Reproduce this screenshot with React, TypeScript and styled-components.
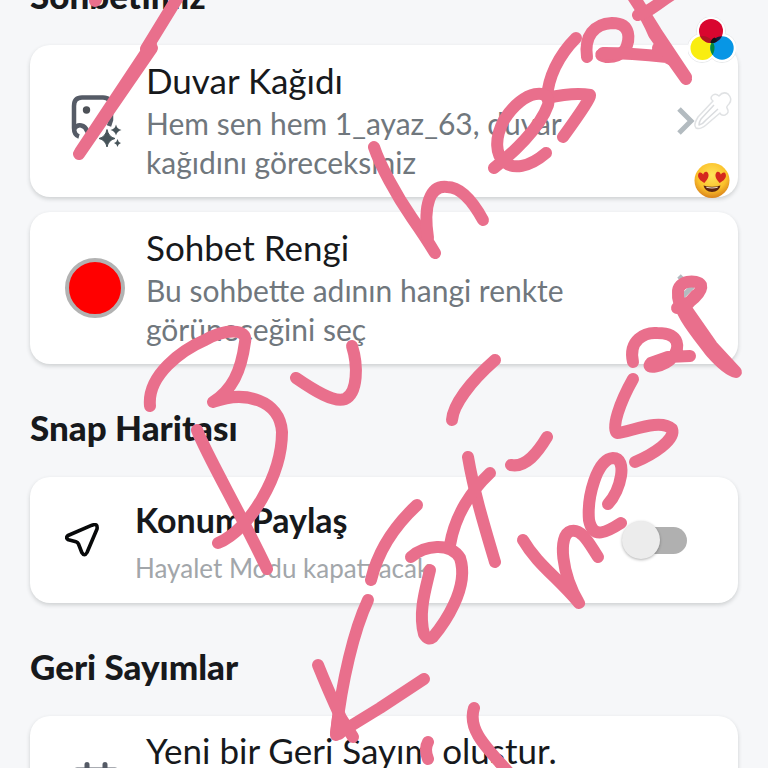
import React from "react";
import styled, { createGlobalStyle } from "styled-components";

const GlobalStyle = createGlobalStyle`
  * { box-sizing: border-box; }
  body {
    margin: 0;
    background: #f6f7f9;
    font-family: Lato, "Open Sans", sans-serif;
    color: #17191c;
  }
`;

const Screen = styled.main`
  position: relative;
  height: 100vh;
  overflow: hidden;
`;

const Scrolled = styled.div`
  display: flex;
  flex-direction: column;
  gap: 43px;
  margin-top: -25px;
  padding: 0 30px;
`;

const Section = styled.section`
  display: flex;
  flex-direction: column;
  gap: 15px;
`;

const Heading = styled.h2`
  margin: 0 0 15px;
  font-size: 35px;
  line-height: 40px;
  font-weight: 900;
`;

const cardBase = `
  display: flex;
  align-items: center;
  width: 100%;
  border: 0;
  border-radius: 20px;
  background: #fff;
  box-shadow: 0 2px 4px rgba(40, 50, 50, 0.2);
  font-family: inherit;
  color: inherit;
  text-align: left;
`;

const CardButton = styled.button`
  ${cardBase}
  gap: 21px;
  min-height: 152px;
  padding: 14px 42px 14px 35px;
`;

const CardLabel = styled.label`
  ${cardBase}
  gap: 36px;
  min-height: 126px;
  padding: 16px 51px 16px 35px;
`;

const Slot = styled.span<{ $size: number }>`
  display: flex;
  flex: none;
  align-items: center;
  justify-content: center;
  width: ${(p) => p.$size}px;
  height: ${(p) => p.$size}px;
`;

const TextBlock = styled.span<{ $top?: boolean }>`
  display: flex;
  flex: 1;
  flex-direction: column;
  align-self: ${(p) => (p.$top ? "flex-start" : "center")};
  gap: 4px;
  min-width: 0;
`;

const Title = styled.span<{ $strong?: boolean }>`
  padding-top: ${(p) => (p.$strong ? 6 : 0)}px;
  font-size: ${(p) => (p.$strong ? 34 : 35)}px;
  line-height: 40px;
  font-weight: ${(p) => (p.$strong ? 700 : 400)};
`;

const Detail = styled.span<{ $faint?: boolean }>`
  max-width: 440px;
  padding-top: ${(p) => (p.$faint ? 6 : 0)}px;
  font-size: ${(p) => (p.$faint ? 26 : 30)}px;
  line-height: ${(p) => (p.$faint ? 36 : 39)}px;
  color: ${(p) => (p.$faint ? "#a2a6aa" : "#70777d")};
`;

const Swatch = styled.span`
  width: 60px;
  height: 60px;
  border: 4px solid #b2b2b2;
  border-radius: 50%;
  background: #ff0000;
`;

const Switch = styled.input`
  appearance: none;
  display: flex;
  flex: none;
  align-items: center;
  width: 56px;
  height: 27px;
  margin: 0;
  border-radius: 14px;
  background: #b0b0b0;
  &::before {
    content: "";
    flex: none;
    width: 38px;
    height: 38px;
    margin: 0 -9px;
    border-radius: 50%;
    background: #ececec;
    box-shadow: 0 1px 3px rgba(0, 0, 0, 0.3);
  }
  &:checked { justify-content: flex-end; }
`;

const Doodle = styled.svg`
  position: absolute;
  top: 0;
  left: 0;
  width: 100%;
  pointer-events: none;
  fill: none;
  stroke: #e96f8c;
  stroke-width: 12;
  stroke-linecap: round;
  stroke-linejoin: round;
`;

const Tools = styled.div`
  position: absolute;
  top: 17px;
  right: 32px;
  display: flex;
  flex-direction: column;
  gap: 22px;
`;

const Tool = styled.button`
  display: flex;
  align-items: center;
  justify-content: center;
  width: 48px;
  height: 48px;
  padding: 0;
  border: 0;
  background: none;
`;

const Chevron = () => (
  <svg width="20" height="32" viewBox="0 0 20 32" fill="none" stroke="#b3bbc0" strokeWidth="5" aria-hidden="true">
    <path d="M3 4 L15 16 L3 28" />
  </svg>
);

const WallpaperIcon = () => (
  <svg width="60" height="60" viewBox="0 0 60 60" fill="none" aria-hidden="true">
    <path d="M14 45.500 Q9 44 9 37 V15 Q9 6.500 17 6.500 H38 Q46 6.500 46 15 V29 L44 35" stroke="#555b66" strokeWidth="4.500" />
    <path d="M9 38 C13 32 20 34 22 40 C25 48 33 34 37 30" stroke="#555b66" strokeWidth="4.500" />
    <circle cx="21.500" cy="19" r="3.700" fill="#4d5157" />
    <path d="M42 38.500 Q43.500 46 50 47.500 Q43.500 49 42 56 Q40.500 49 34 47.500 Q40.500 46 42 38.500Z" fill="#47545a" stroke="#47545a" />
    <path d="M51 33.500 Q52 38 56.500 39 Q52 40 51 44.500 Q50 40 45.500 39 Q50 38 51 33.500Z" fill="#47545a" />
    <path d="M52.500 48 Q53 51 56 52 Q53 53 52.500 56 Q52 53 49 52 Q52 51 52.500 48Z" fill="#47545a" />
  </svg>
);

const LocationIcon = () => (
  <svg width="34" height="34" viewBox="0 0 34 34" fill="none" stroke="#08090a" strokeWidth="3.600" strokeLinejoin="round" aria-hidden="true">
    <path d="M3 12.500 L27 2.200 Q33 0 32 6 L22 29.500 Q19.500 34 16.800 29.500 L13.500 21 Q12.800 19.200 11 18.700 L3.500 16.800 Q0 15 3 12.500Z" />
  </svg>
);

const CalendarIcon = () => (
  <svg width="60" height="60" viewBox="0 0 60 60" fill="none" stroke="#555b66" strokeWidth="5" strokeLinecap="round" aria-hidden="true">
    <path d="M22 2.500 V12 M40 2.500 V12" />
    <rect x="9" y="8" width="44" height="46" rx="3" />
    <path d="M9 22 H53" />
  </svg>
);

const ColorIcon = () => (
  <svg width="48" height="48" viewBox="0 0 48 48" aria-hidden="true">
    <g fill="#fff" stroke="#e6e8ea" strokeWidth="1">
      <circle cx="23" cy="14" r="14.500" />
      <circle cx="14" cy="31" r="14.500" />
      <circle cx="34" cy="31" r="14.500" />
    </g>
    <g fill="#fff">
      <circle cx="23" cy="14" r="14" />
      <circle cx="14" cy="31" r="14" />
      <circle cx="34" cy="31" r="14" />
    </g>
    <clipPath id="blueDisc"><circle cx="34" cy="31" r="11.700" /></clipPath>
    <clipPath id="redDisc"><circle cx="23" cy="14" r="12" /></clipPath>
    <circle cx="14.500" cy="31" r="12" fill="#f9ed10" />
    <circle cx="34" cy="31" r="11.700" fill="#0796e5" />
    <circle cx="23" cy="14" r="12" fill="#d9062f" />
    <circle cx="14.500" cy="31" r="12" fill="#04883b" clipPath="url(#blueDisc)" />
    <circle cx="34" cy="31" r="11.700" fill="#111d3c" clipPath="url(#redDisc)" />
    <circle cx="14.500" cy="31" r="12" fill="#b01422" clipPath="url(#redDisc)" />
    <path d="M22.500 26 Q22.500 22.500 26.500 20.500 Q29 21.500 28.500 24.500 Q26 26.500 22.500 26Z" fill="#101417" />
  </svg>
);

const DropperIcon = () => (
  <svg width="48" height="48" viewBox="0 0 48 48" strokeLinejoin="round" aria-hidden="true">
    <path d="M25 14 Q21 11 25 8 Q28 6 31 9 Q35 4 40 7 Q45 12 41 17 Q38 20 39 21 Q42 26 37 28 Q33 29 32 26 L18 38 Q12 43 8 41 Q5 38 10 30Z" fill="#fff" stroke="#e0e2e4" strokeWidth="1.500" />
    <path d="M26 18 L13 32 Q11 35 11 38 Q15 37 18 33 L30 22" fill="#fff" stroke="#dadcdf" strokeWidth="1.500" />
  </svg>
);

const HEART = "M0 6 C-4 3 -6 0 -5 -3 C-4 -6 -1 -5 0 -2.500 C1 -5 4 -6 5 -3 C6 0 4 3 0 6Z";

const HeartEyesIcon = () => (
  <svg width="48" height="48" viewBox="0 0 48 48" aria-hidden="true">
    <defs>
      <radialGradient id="face" cx="0.500" cy="0.350" r="0.650">
        <stop offset="0" stopColor="#ffe45a" />
        <stop offset="0.650" stopColor="#fbc12b" />
        <stop offset="1" stopColor="#d9831c" />
      </radialGradient>
    </defs>
    <circle cx="24" cy="23.500" r="17.500" fill="url(#face)" />
    <path d={HEART} transform="translate(15.500 20) rotate(-8)" fill="#d5281e" />
    <path d={HEART} transform="translate(32.500 20) rotate(8)" fill="#d5281e" />
    <path d="M15.500 28.500 Q24 31 32.500 28.500 Q31 35 24 35 Q17 35 15.500 28.500Z" fill="#5b2411" />
    <path d="M18 29.800 Q24 31.300 30 29.800 L29.500 30.800 Q24 32.300 18.500 30.800Z" fill="#f3e3d0" />
  </svg>
);

const STROKES = [
  "M95 -4 L96 0 L95 1",
  "M185 -14 L148 46 M182 -10 L146 49",
  "M151 45 L80 152 M152 48 L79 154",
  "M374 147 C380 165 396 195 412 218 Q426 238 435 253",
  "M428 238 C423 205 430 185 447 187 Q465 187 483 220",
  "M576 38 C558 56 548 78 547 98 C565 94 580 93 590 95 Q592 97 563 137",
  "M494 168 C512 154 540 128 548 105 C552 88 524 88 504 120 C484 158 511 183 546 153",
  "M587 57 C584 36 594 24 612 23 C632 23 630 40 625 50 Q617 58 606 57 Q597 55 605 53",
  "M603 53 Q630 53 667 57 L658 48 L672 60 L664 56",
  "M632 -5 C638 5 645 12 654 34 L686 79 M636 0 L656 32 L686 77",
  "M638 15 C650 12 656 4 676 -8",
  "M150 406 C147 375 182 350 205 340 C225 329 248 328 245 342 C241 372 232 390 213 402 C245 390 280 400 282 432 C282 475 250 530 218 543",
  "M197 430 C207 456 240 512 267 569",
  "M296 378 C315 391 334 403 345 399 C358 393 358 365 352 346",
  "M495 360 C470 382 453 405 452 420",
  "M468 457 C474 492 484 525 495 562",
  "M490 473 C472 490 455 515 450 545",
  "M511 465 C526 468 538 452 547 437",
  "M411 557 C425 545 450 542 460 558 C470 588 443 625 433 637 Q428 641 424 634 C418 612 426 588 430 570",
  "M417 505 C390 530 377 555 371 580",
  "M368 600 C354 630 342 680 336 733",
  "M318 665 Q328 690 341 718 L353 737",
  "M424 679 L380 708 L336 735 L338 718 L346 728 L339 734",
  "M428 742 Q424 749 428 759",
  "M474 708 C467 730 487 748 510 774",
  "M523 540 C537 564 557 577 579 603 C562 575 557 535 571 531 C582 528 590 545 598 557",
  "M608 504 C621 490 628 458 613 458 C597 459 587 497 589 520 C593 540 607 532 621 523",
  "M633 379 C620 402 611 428 617 433 C630 432 660 418 672 429 C676 440 652 455 635 462",
  "M633 362 C628 340 645 332 657 333 C682 333 679 349 673 357 C664 367 644 370 651 363 L668 357 L690 356",
  "M677 308 C690 304 703 292 701 285 C697 279 677 280 678 293 C676 310 700 337 711 352 Q727 370 736 372 L712 346 L682 303 M687 305 L696 295",
];

export default function App() {
  return (
    <>
      <GlobalStyle />
      <Screen>
        <Scrolled>
          <Section>
            <Heading>Sohbetimiz</Heading>
            <CardButton type="button">
              <Slot $size={60}><WallpaperIcon /></Slot>
              <TextBlock>
                <Title>Duvar Kağıdı</Title>
                <Detail>Hem sen hem 1_ayaz_63, duvar kağıdını göreceksiniz</Detail>
              </TextBlock>
              <Chevron />
            </CardButton>
            <CardButton type="button">
              <Swatch />
              <TextBlock>
                <Title>Sohbet Rengi</Title>
                <Detail>Bu sohbette adının hangi renkte görüneceğini seç</Detail>
              </TextBlock>
              <Chevron />
            </CardButton>
          </Section>
          <Section>
            <Heading>Snap Haritası</Heading>
            <CardLabel>
              <Slot $size={34}><LocationIcon /></Slot>
              <TextBlock>
                <Title $strong>Konum Paylaş</Title>
                <Detail $faint>Hayalet Modu kapatılacak</Detail>
              </TextBlock>
              <Switch type="checkbox" role="switch" />
            </CardLabel>
          </Section>
          <Section>
            <Heading>Geri Sayımlar</Heading>
            <CardButton type="button">
              <Slot $size={60}><CalendarIcon /></Slot>
              <TextBlock $top>
                <Title>Yeni bir Geri Sayım oluştur.</Title>
              </TextBlock>
              <Chevron />
            </CardButton>
          </Section>
        </Scrolled>
        <Doodle viewBox="0 0 768 768" aria-hidden="true">
          {STROKES.map((d) => <path key={d} d={d} />)}
        </Doodle>
        <Tools>
          <Tool type="button" aria-label="Renkler"><ColorIcon /></Tool>
          <Tool type="button" aria-label="Damlalık"><DropperIcon /></Tool>
          <Tool type="button" aria-label="Emoji"><HeartEyesIcon /></Tool>
        </Tools>
      </Screen>
    </>
  );
}
